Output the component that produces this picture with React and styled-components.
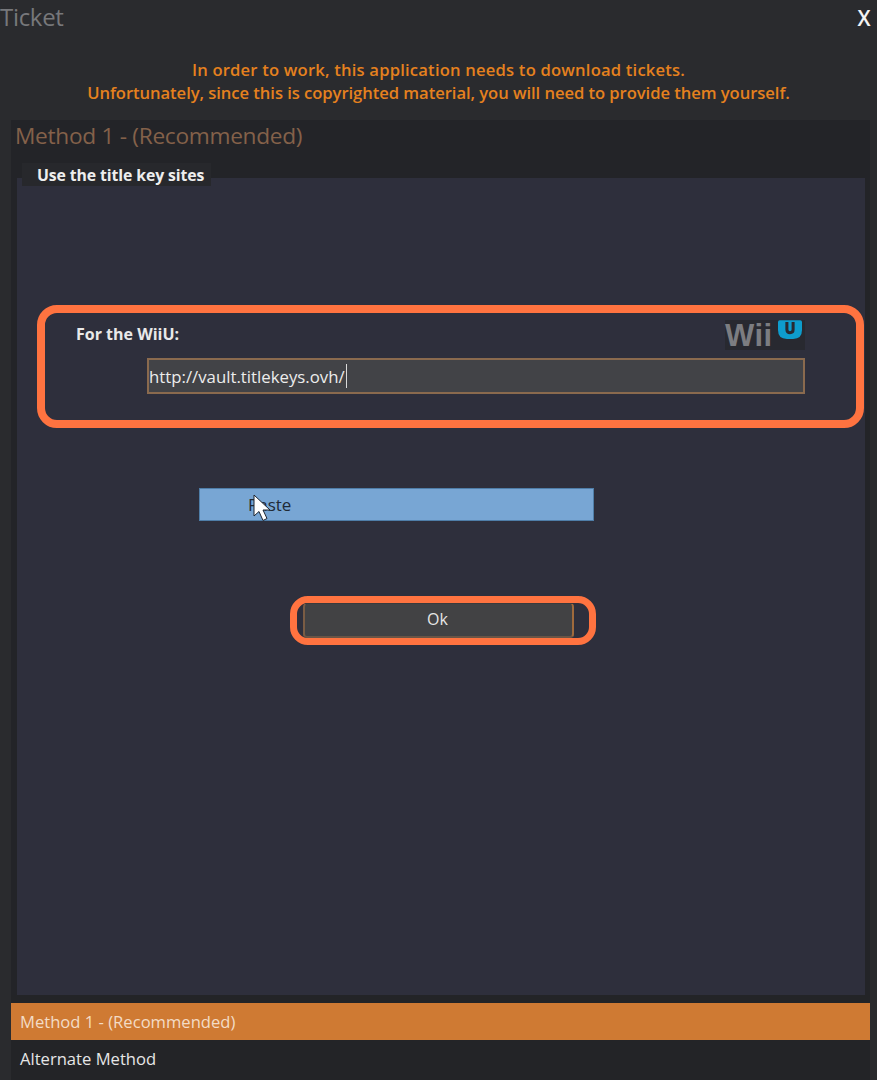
import React from "react";
import styled, { createGlobalStyle } from "styled-components";

const Global = createGlobalStyle`
  html, body { margin: 0; padding: 0; background: #2a2b2e; }
  * { box-sizing: border-box; }
`;

const Page = styled.div`
  width: 877px;
  height: 1080px;
  overflow: hidden;
  background: #2a2b2e;
  display: flex;
  flex-direction: column;
  font-family: "Open Sans", "Noto Sans", sans-serif;
`;

const TitleBar = styled.header`
  height: 37px;
  flex: none;
  display: flex;
  align-items: center;
  justify-content: space-between;
  padding: 0 4px 0 0;
`;

const WindowTitle = styled.h1`
  margin: 0;
  font-size: 24px;
  font-weight: 400;
  color: #77787b;
  letter-spacing: -0.3px;
  position: relative;
  top: -2px;
`;

const CloseMark = styled.span`
  font-size: 21px;
  font-weight: 600;
  color: #f4f4f4;
  width: 18px;
  text-align: center;
  line-height: 1;
`;

const Notice = styled.div`
  height: 83px;
  flex: none;
  padding-top: 21px;
  display: flex;
  flex-direction: column;
  align-items: center;
  font-size: 16.6px;
  line-height: 23px;
  font-weight: 600;
  color: #e5811e;
`;

const NoticeLine = styled.p`
  margin: 0;
  letter-spacing: ${(p) => p.$spacing}px;
`;

const Panel = styled.section`
  flex: none;
  height: 883px;
  margin: 0 7px 0 11px;
  padding: 0 5px 8px 6px;
  background: #232428;
  display: flex;
  flex-direction: column;
`;

const PanelHeading = styled.h2`
  margin: 0 0 0 -2px;
  height: 43px;
  flex: none;
  padding-bottom: 12px;
  display: flex;
  align-items: center;
  font-size: 22.7px;
  font-weight: 400;
  letter-spacing: -0.3px;
  color: #84614a;
`;

const TabLabel = styled.div`
  position: relative;
  z-index: 1;
  align-self: flex-start;
  flex: none;
  height: 23px;
  margin-left: 5px;
  padding: 0 7px 0 15px;
  display: flex;
  align-items: center;
  background: #27282c;
  font-size: 15.8px;
  font-weight: 700;
  letter-spacing: -0.1px;
  color: #eeeeee;
`;

const Body = styled.div`
  flex: 1;
  margin-top: -8px;
  background: #2e2f3c;
  display: flex;
  flex-direction: column;
  align-items: flex-start;
  padding: 127px 0 0 20px;
`;

const Ring = styled.div`
  border: ${(p) => p.$width}px solid #ff7340;
  border-radius: ${(p) => p.$radius}px;
`;

const SiteBox = styled(Ring)`
  width: 827px;
  height: 123px;
  padding: 7px 51px 0 102px;
  display: flex;
  flex-direction: column;
  align-items: stretch;
`;

const SiteHeader = styled.div`
  height: 37px;
  display: flex;
  justify-content: space-between;
  align-items: flex-start;
`;

const SiteLabel = styled.span`
  margin: 3px 0 0 -73px;
  padding: 0 2px;
  font-size: 16px;
  font-weight: 700;
  color: #e9e9e9;
`;

const WiiLogo = styled.div`
  width: 80px;
  height: 30px;
  padding: 0 3px 0 0;
  background: #282930;
  display: flex;
  align-items: flex-start;
  justify-content: space-between;
`;

const WiiText = styled.span`
  font-family: "Liberation Sans", Arial, sans-serif;
  font-size: 31px;
  line-height: 31px;
  font-weight: 700;
  color: #7c7d81;
  letter-spacing: 0.5px;
`;

const UrlField = styled.div`
  height: 36px;
  margin-top: 1px;
  border: 2px solid #8a6a4e;
  background: #424347;
  display: flex;
  align-items: center;
  font-size: 16.8px;
  color: #ececec;
`;

const Caret = styled.span`
  width: 1px;
  height: 24px;
  margin-left: 1px;
  background: #d9d9d9;
`;

const PasteButton = styled.div`
  position: relative;
  width: 395px;
  height: 33px;
  margin: 60px 0 0 162px;
  padding-left: 48px;
  display: flex;
  align-items: center;
  background: #78a6d4;
  border: 1px solid #4f7ea8;
  font-size: 17px;
  color: #1f2a36;
`;

const Pointer = styled.svg`
  position: absolute;
  left: 53px;
  top: 5px;
`;

const OkRing = styled(Ring)`
  width: 306px;
  height: 49px;
  margin: 75px 0 0 253px;
  padding: 0 15px 0 6px;
`;

const OkButton = styled.div`
  height: 35px;
  padding: 0 2px 2px 0;
  background: #424244;
  border: 1px solid #3a3a3c;
  border-left: 2px solid #7a5c44;
  border-right: 2px solid #a06a3c;
  border-bottom: 2px solid #6b5546;
  border-radius: 4px;
  display: flex;
  align-items: center;
  justify-content: center;
  font-size: 16px;
  color: #e6e6e6;
`;

const MethodList = styled.nav`
  flex: 1;
  margin: -8px 7px 0 11px;
  padding-top: 8px;
  background: #232427;
  display: flex;
  flex-direction: column;
  position: relative;
`;

const MethodItem = styled.div`
  height: ${(p) => (p.$active ? 37 : 34)}px;
  margin-top: ${(p) => (p.$active ? 0 : 1)}px;
  padding-left: 9px;
  display: flex;
  align-items: center;
  flex: none;
  font-size: 16.6px;
  color: ${(p) => (p.$active ? "#f3dcc6" : "#e6e6e6")};
  background: ${(p) => (p.$active ? "#cf7a33" : "transparent")};
`;

const U = () => (
  <svg width="24" height="20" viewBox="0 0 27 22">
    <path d="M2 0H25Q27 0 27 2V11Q27 21 17 21H10Q0 21 0 11V2Q0 0 2 0Z" fill="#0e9ccc" />
    <path d="M10 2V10.5Q10 14 13.5 14T17 10.5V2" fill="none" stroke="#282930" strokeWidth="3.4" />
  </svg>
);

export default function App() {
  return (
    <Page>
      <Global />
      <TitleBar>
        <WindowTitle>Ticket</WindowTitle>
        <CloseMark>X</CloseMark>
      </TitleBar>
      <Notice>
        <NoticeLine $spacing={0.2}>In order to work, this application needs to download tickets.</NoticeLine>
        <NoticeLine $spacing={-0.05}>
          Unfortunately, since this is copyrighted material, you will need to provide them yourself.
        </NoticeLine>
      </Notice>
      <Panel>
        <PanelHeading>Method 1 - (Recommended)</PanelHeading>
        <TabLabel>Use the title key sites</TabLabel>
        <Body>
          <SiteBox $width={8} $radius={20}>
            <SiteHeader>
              <SiteLabel>For the WiiU:</SiteLabel>
              <WiiLogo>
                <WiiText>Wii</WiiText>
                <U />
              </WiiLogo>
            </SiteHeader>
            <UrlField>
              http://vault.titlekeys.ovh/
              <Caret />
            </UrlField>
          </SiteBox>
          <PasteButton>
            Paste
            <Pointer width="20" height="28" viewBox="0 0 20 28">
              <path d="M1 1V22L6 17.5L10 26.5L14 24.5L10 16H17Z" fill="#fff" stroke="#1c2430" strokeWidth="1" />
            </Pointer>
          </PasteButton>
          <OkRing $width={7} $radius={18}>
            <OkButton>Ok</OkButton>
          </OkRing>
        </Body>
      </Panel>
      <MethodList>
        <MethodItem $active>Method 1 - (Recommended)</MethodItem>
        <MethodItem>Alternate Method</MethodItem>
      </MethodList>
    </Page>
  );
}
